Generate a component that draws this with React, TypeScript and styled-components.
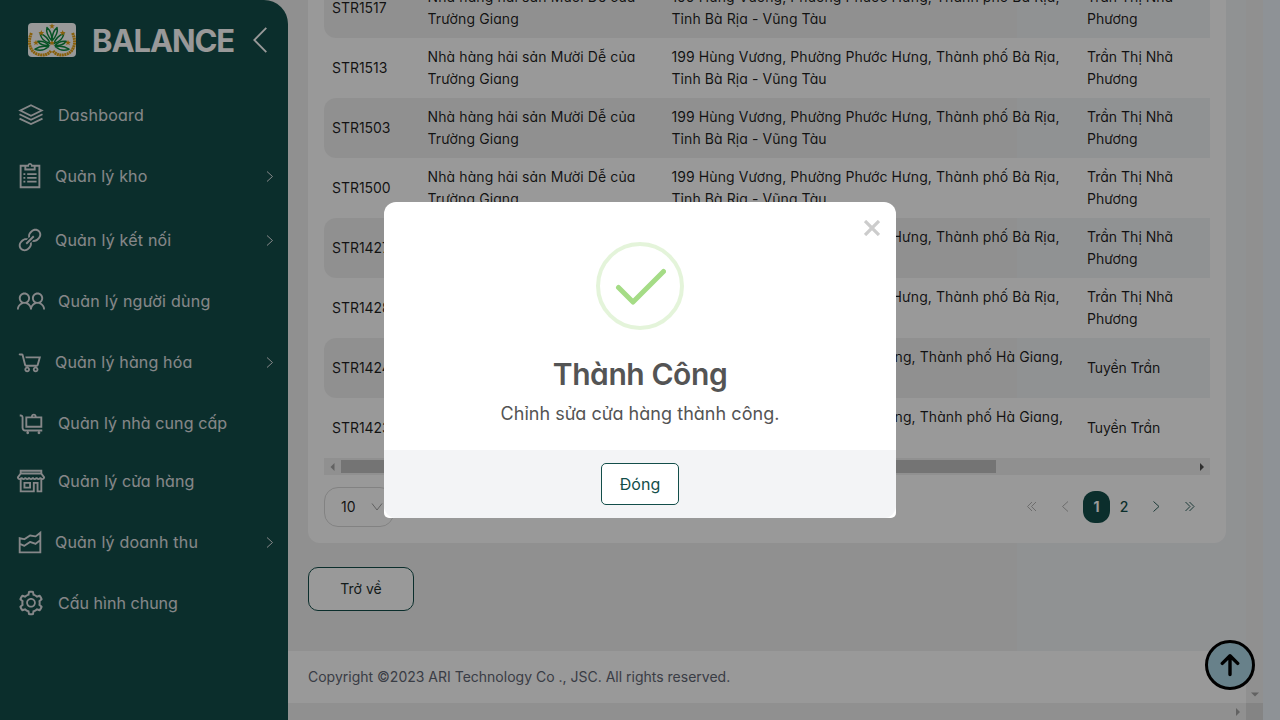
import React from 'react';
import styled, { createGlobalStyle, css } from 'styled-components';
import {
  LiaClipboardListSolid,
  LiaLinkSolid,
  LiaUserFriendsSolid,
  LiaShoppingCartSolid,
  LiaLuggageCartSolid,
  LiaStoreAltSolid,
  LiaChartAreaSolid,
} from 'react-icons/lia';
import { AiOutlineSetting } from 'react-icons/ai';

const brand = '#134e4a';

const GlobalStyle = createGlobalStyle`
  *, *::before, *::after { box-sizing: border-box; }
  body {
    margin: 0;
    overflow: hidden;
    background: #edf3fa;
    font-family: Inter, "Noto Sans", sans-serif;
    font-feature-settings: "cv11";
    font-size: 14px;
    color: rgba(0, 0, 0, 0.88);
  }
  button { font: inherit; font-feature-settings: inherit; letter-spacing: inherit; cursor: pointer; }
  svg { display: block; flex: none; }
`;

const Screen = styled.div`
  position: relative;
  display: flex;
  width: 1280px;
  height: 720px;
  overflow: hidden;
`;

/* ---------- sidebar ---------- */

const SidebarSlot = styled.div`
  flex: 0 0 288px;
  background: #f1f1f1;
`;

const Sidebar = styled.aside`
  height: 100%;
  background: ${brand};
  border-top-right-radius: 24px;
`;

const Brand = styled.header`
  display: flex;
  align-items: center;
  height: 86px;
  padding: 0 21px 6px 28px;
  color: #fff;
`;

const BrandName = styled.h1`
  flex: 1;
  margin: 0 0 0 16px;
  padding-top: 2px;
  font-size: 31px;
  line-height: 40px;
  font-weight: 700;
  letter-spacing: -1.1px;
`;

const Nav = styled.nav`
  display: flex;
  flex-direction: column;
`;

const NavItem = styled.a<{ $submenu?: boolean }>`
  display: flex;
  align-items: center;
  height: ${(p) => (p.$submenu ? 64 : 58)}px;
  padding: 0 12px 0 ${(p) => (p.$submenu ? 15 : 16)}px;
  gap: ${(p) => (p.$submenu ? 10 : 12)}px;
  color: #e0e2e5;
  font-size: 16px;
  line-height: 24px;
`;

const NavIcon = styled.span`
  display: flex;
  flex: 0 0 30px;
  justify-content: center;
`;

const NavLabel = styled.span<{ $tracking: number }>`
  flex: 1;
  letter-spacing: ${(p) => p.$tracking}px;
`;

/* ---------- main area ---------- */

const Main = styled.main`
  display: flex;
  flex-direction: column;
  flex: 0 0 958px;
  height: 720px;
  overflow: hidden;
  background: linear-gradient(90deg, #f1f1f1 729px, #f1f3f6 729px);
`;

const Content = styled.div`
  flex: 1;
  padding: 0 20px;
  overflow: hidden;
`;

const Card = styled.section`
  height: 543px;
  padding: 0 16px;
  overflow: hidden;
  background: #fff;
  border-radius: 0 0 12px 12px;
`;

const TableView = styled.div`
  display: flex;
  flex-direction: column;
  justify-content: flex-end;
  height: 458px;
  overflow: hidden;
`;

const Row = styled.div<{ $striped: boolean }>`
  display: grid;
  flex: 0 0 60px;
  grid-template-columns: 95.5px 244px 415.5px 1fr;
  align-items: center;
  line-height: 22px;
  border-radius: 12px 0 0 12px;
  ${(p) =>
    p.$striped &&
    css`
      background: linear-gradient(90deg, #f1f1f1 693px, #f1f3f6 693px);
    `}
`;

const Cell = styled.div<{ $tracking?: number; $end?: boolean }>`
  padding: 0 8px;
  white-space: nowrap;
  letter-spacing: ${(p) => p.$tracking ?? 0}px;
  ${(p) =>
    p.$end &&
    css`
      padding-right: 16px;

      & > :first-child {
        text-align: right;
      }
    `}
`;

const Line = styled.div`
  height: 22px;
`;

const ScrollTrack = styled.div`
  display: flex;
  align-items: center;
  justify-content: space-between;
  height: 17px;
  background: #f1f1f1;
`;

const ScrollThumb = styled.div`
  width: 655px;
  height: 13px;
  margin-right: auto;
  background: #c1c1c1;
`;

const ArrowBox = styled.span`
  display: flex;
  align-items: center;
  justify-content: center;
  width: 17px;
  height: 17px;
`;

const TableFooter = styled.div`
  display: flex;
  align-items: center;
  justify-content: space-between;
  height: 64px;
`;

const PageSize = styled.div`
  display: flex;
  align-items: center;
  justify-content: space-between;
  width: 70px;
  height: 40px;
  padding: 0 10px 1px 16px;
  border: 1px solid #d9d9d9;
  border-radius: 14px;

  svg {
    color: #a0a0a0;
  }
`;

const Pager = styled.div`
  display: flex;
  align-items: center;
  padding-right: 3px;
  color: ${brand};
`;

const PagerArrow = styled.button<{ $muted?: boolean }>`
  display: flex;
  align-items: center;
  justify-content: center;
  width: 34px;
  height: 32px;
  padding: 0 0 1px;
  border: 0;
  background: none;
  color: ${(p) => (p.$muted ? '#b5b5b5' : '#2f625e')};
`;

const PageNumber = styled.button<{ $current?: boolean }>`
  width: ${(p) => (p.$current ? 27 : 29)}px;
  height: 32px;
  padding: 0 ${(p) => (p.$current ? 0 : 1)}px 2px 0;
  border: 0;
  border-radius: 12px;
  background: ${(p) => (p.$current ? brand : 'transparent')};
  color: ${(p) => (p.$current ? '#fff' : brand)};
  font-weight: ${(p) => (p.$current ? 700 : 500)};
`;

const BackButton = styled.button`
  width: 106px;
  height: 44px;
  margin-top: 24px;
  padding: 0 0 2px;
  border: 1px solid ${brand};
  border-radius: 10px;
  background: #fff;
  color: #1f2f2e;
`;

const Copyright = styled.footer`
  display: flex;
  flex: 0 0 52px;
  align-items: center;
  padding: 0 20px 2px;
  background: #fff;
  color: #5f6673;
`;

const PageTrackX = styled.div`
  display: flex;
  flex: 0 0 17px;
  justify-content: flex-end;
  background: #f1f1f1;
`;

const PageTrackY = styled.div`
  display: flex;
  flex: 0 0 17px;
  flex-direction: column;
  justify-content: flex-end;
  background: #f1f1f1;
`;

const TrackCorner = styled.div`
  height: 17px;
  background: #dcdcdc;
`;

const ToTop = styled.button`
  position: absolute;
  right: 25px;
  bottom: 30px;
  display: flex;
  align-items: center;
  justify-content: center;
  width: 50px;
  height: 50px;
  padding: 0;
  border: 3px solid #000;
  border-radius: 50%;
  background: #add8e6;
`;

/* ---------- dialog ---------- */

const Backdrop = styled.div`
  position: absolute;
  inset: 0;
  display: flex;
  align-items: center;
  justify-content: center;
  background: rgba(0, 0, 0, 0.4);
`;

const Dialog = styled.div`
  position: relative;
  display: flex;
  flex-direction: column;
  align-items: center;
  width: 512px;
  height: 316px;
  overflow: hidden;
  background: #fff;
  border-radius: 12px 12px 5px 5px;
  color: #545454;
`;

const CloseButton = styled.button`
  position: absolute;
  top: 18px;
  right: 16px;
  padding: 0;
  border: 0;
  background: none;
`;

const SuccessRing = styled.div`
  display: flex;
  align-items: center;
  justify-content: center;
  width: 88px;
  height: 88px;
  margin-top: 40px;
  border: 4px solid rgba(165, 220, 134, 0.3);
  border-radius: 50%;
`;

const DialogTitle = styled.h2`
  margin: 26px 0 0;
  font-size: 30px;
  line-height: 36px;
  font-weight: 600;
  letter-spacing: -0.42px;
`;

const DialogText = styled.p`
  flex: 1;
  margin: 8px 0 0;
  font-size: 18px;
  line-height: 27px;
  letter-spacing: 0.04px;
`;

const DialogActions = styled.div`
  display: flex;
  align-items: center;
  justify-content: center;
  width: 100%;
  height: 68px;
  background: #f3f4f6;
  border-radius: 0 0 12px 12px;
`;

const DialogButton = styled.button`
  width: 78px;
  height: 42px;
  padding: 0;
  border: 1px solid ${brand};
  border-radius: 5px;
  background: #fff;
  color: ${brand};
  font-size: 16px;
`;

/* ---------- drawings ---------- */

const Logo = () => (
  <svg width="48" height="34" viewBox="0 0 48 34" fill="none">
    <rect width="48" height="34" rx="4" fill="#fff" />
    <g stroke="#e3a013" strokeWidth="3" strokeDasharray="2 0.5">
      <path d="M3.4 10C-.6 19 1.6 28.5 9.6 31.3c5 1.6 10.6.6 13.4-3.6" />
      <path d="M44.6 10c4 9 1.8 18.5-6.2 21.3-5 1.6-10.6.6-13.4-3.6" />
    </g>
    <g stroke="#0c8a3e" strokeWidth="1.5" strokeLinejoin="round">
      <path d="M24 18c-3.500-4-6.500-8-5-13.500C22.500 7.500 24 12 24 18c0-6 1.500-10.500 5-13.500 1.500 5.500-1.500 9.500-5 13.500z" />
      <path d="M22 20.500c-5-1.500-9-4.500-9.800-10C17.500 12.500 20.500 16 22 20.500zM26 20.500c5-1.500 9-4.500 9.800-10C30.500 12.500 27.500 16 26 20.500z" />
      <path d="M21 22.500c-3.500.3-8.500-.5-11.200-4.200 4.200-.6 8.200.7 11.200 4.200zM27 22.500c3.500.3 8.500-.5 11.200-4.200-4.200-.6-8.200.7-11.200 4.200z" />
      <path d="M20.500 23.800c-4 3.500-8.500 4.400-13.500 2.400 4-2.700 9-3.400 13.500-2.400zM27.500 23.800c4 3.500 8.500 4.400 13.500 2.400-4-2.700-9-3.400-13.500-2.400z" />
    </g>
    <g fill="#e3a013">
      {[
        [24, 3.2],
        [13.3, 10],
        [34.7, 10],
        [8, 19.8],
        [40, 19.8],
        [24, 20],
      ].map(([x, y]) => (
        <path
          key={`${x}-${y}`}
          transform={`translate(${x} ${y})`}
          d="M0-3 .75-1 2.900-.9 1.200.4 1.800 2.500 0 1.300-1.800 2.500-1.200.4-2.900-.9-.75-1z"
        />
      ))}
    </g>
  </svg>
);

const CollapseIcon = () => (
  <svg width="14" height="26" viewBox="0 0 14 26" fill="none" stroke="currentColor" strokeWidth="1.8">
    <path d="M13.300.8 1.300 13l12 12.200" />
  </svg>
);

const LayersIcon = () => (
  <svg width="26" height="24" viewBox="0 0 26 24" fill="none" stroke="currentColor" strokeWidth="1.8">
    <path d="M13 2.300 23.700 7.500 13 12.700 2.300 7.500z" />
    <path d="m1.500 11.300 11.500 5.500 11.500-5.500" />
    <path d="m1.500 15.600 11.500 5.500 11.500-5.500" />
  </svg>
);

const chevrons = {
  submenu: 'M3 1.500 8.500 6.500 3 11.500',
  right: 'M3.500 1.500 9 6.500 3.500 11.500',
  left: 'M8 1.500 2.500 6.500 8 11.500',
  doubleRight: 'M1.500 2 6 6.500 1.500 11M5.500 2 10 6.500 5.500 11',
  doubleLeft: 'M6 2 1.500 6.500 6 11M10 2 5.500 6.500 10 11',
  down: 'M1 3.500 6 10 11 3.500',
};

const Chevron = ({ dir }: { dir: keyof typeof chevrons }) => (
  <svg width="12" height="13" viewBox="0 0 12 13" fill="none" stroke="currentColor" strokeWidth="1">
    <path d={chevrons[dir]} />
  </svg>
);

const triangles = { left: 'M5.500 0v8L1.500 4z', right: 'M2 0v8l4-4z', down: 'M0 1.500h8l-4 4z' };

const Triangle = ({ dir, color }: { dir: keyof typeof triangles; color: string }) => (
  <ArrowBox>
    <svg width="8" height="8" viewBox="0 0 8 8" fill={color}>
      <path d={triangles[dir]} />
    </svg>
  </ArrowBox>
);

/* ---------- data ---------- */

const navItems = [
  { label: 'Dashboard', icon: <LayersIcon />, tracking: 0.22 },
  { label: 'Quản lý kho', icon: <LiaClipboardListSolid size={30} />, submenu: true, tracking: 0.16 },
  { label: 'Quản lý kết nối', icon: <LiaLinkSolid size={30} />, submenu: true, tracking: 0.21 },
  { label: 'Quản lý người dùng', icon: <LiaUserFriendsSolid size={30} />, tracking: 0.25 },
  { label: 'Quản lý hàng hóa', icon: <LiaShoppingCartSolid size={30} />, submenu: true, tracking: 0.17 },
  { label: 'Quản lý nhà cung cấp', icon: <LiaLuggageCartSolid size={30} />, tracking: 0.1 },
  { label: 'Quản lý cửa hàng', icon: <LiaStoreAltSolid size={30} />, tracking: 0.14 },
  { label: 'Quản lý doanh thu', icon: <LiaChartAreaSolid size={30} />, submenu: true, tracking: 0.2 },
  { label: 'Cấu hình chung', icon: <AiOutlineSetting size={28} />, tracking: 0.03 },
];

const seafood = {
  name: ['Nhà hàng hải sản Mười Dễ của', 'Trường Giang'],
  address: ['199 Hùng Vương, Phường Phước Hưng, Thành phố Bà Rịa,', 'Tỉnh Bà Rịa - Vũng Tàu'],
  owner: ['Trần Thị Nhã', 'Phương'],
};

const haGiang = {
  name: ['Tuyền Trần'],
  address: ['Phường Quang Trung, Thành phố Hà Giang,', 'Tỉnh Hà Giang'],
  owner: ['Tuyền Trần'],
  alignEnd: true,
};

const stores: { code: string; name: string[]; address: string[]; owner: string[]; alignEnd?: boolean }[] = [
  { code: 'STR1517', ...seafood },
  { code: 'STR1513', ...seafood },
  { code: 'STR1503', ...seafood },
  { code: 'STR1500', ...seafood },
  { code: 'STR1427', ...seafood },
  { code: 'STR1428', ...seafood },
  { code: 'STR1424', ...haGiang },
  { code: 'STR1423', ...haGiang },
];

const Lines = ({ text }: { text: string[] }) => (
  <>
    {text.map((line) => (
      <Line key={line}>{line}</Line>
    ))}
  </>
);

export default function App() {
  return (
    <Screen>
      <GlobalStyle />
      <SidebarSlot>
        <Sidebar>
          <Brand>
            <Logo />
            <BrandName>BALANCE</BrandName>
            <CollapseIcon />
          </Brand>
          <Nav>
            {navItems.map((item) => (
              <NavItem key={item.label} $submenu={item.submenu}>
                <NavIcon>{item.icon}</NavIcon>
                <NavLabel $tracking={item.tracking}>{item.label}</NavLabel>
                {item.submenu && <Chevron dir="submenu" />}
              </NavItem>
            ))}
          </Nav>
        </Sidebar>
      </SidebarSlot>

      <Main>
        <Content>
          <Card>
            <TableView>
              {stores.map((store, i) => (
                <Row key={store.code} $striped={i % 2 === 0}>
                  <Cell $tracking={-0.05}>{store.code}</Cell>
                  <Cell $tracking={0.11}>
                    <Lines text={store.name} />
                  </Cell>
                  <Cell $tracking={0.08} $end={store.alignEnd}>
                    <Lines text={store.address} />
                  </Cell>
                  <Cell $tracking={store.alignEnd ? -0.13 : 0}>
                    <Lines text={store.owner} />
                  </Cell>
                </Row>
              ))}
            </TableView>
            <ScrollTrack>
              <Triangle dir="left" color="#a3a3a3" />
              <ScrollThumb />
              <Triangle dir="right" color="#505050" />
            </ScrollTrack>
            <TableFooter>
              <PageSize>
                10
                <Chevron dir="down" />
              </PageSize>
              <Pager>
                <PagerArrow $muted>
                  <Chevron dir="doubleLeft" />
                </PagerArrow>
                <PagerArrow $muted>
                  <Chevron dir="left" />
                </PagerArrow>
                <PageNumber $current>1</PageNumber>
                <PageNumber>2</PageNumber>
                <PagerArrow>
                  <Chevron dir="right" />
                </PagerArrow>
                <PagerArrow>
                  <Chevron dir="doubleRight" />
                </PagerArrow>
              </Pager>
            </TableFooter>
          </Card>
          <BackButton>Trở về</BackButton>
        </Content>
        <Copyright>Copyright ©2023 ARI Technology Co ., JSC. All rights reserved.</Copyright>
        <PageTrackX>
          <Triangle dir="right" color="#a3a3a3" />
        </PageTrackX>
      </Main>
      <PageTrackY>
        <Triangle dir="down" color="#a3a3a3" />
        <TrackCorner />
      </PageTrackY>

      <ToTop aria-label="Lên đầu trang">
        <svg width="20" height="24" viewBox="0 0 20 24" fill="none" stroke="#000" strokeWidth="3.400" strokeLinecap="round" strokeLinejoin="round">
          <path d="M10 21.500V2.700M2.300 10.400 10 2.700l7.700 7.700" />
        </svg>
      </ToTop>

      <Backdrop>
        <Dialog role="dialog">
          <CloseButton aria-label="Đóng hộp thoại">
            <svg width="16" height="16" viewBox="0 0 16 16" stroke="#ccc" strokeWidth="3.300">
              <path d="m1 1 14 14M15 1 1 15" />
            </svg>
          </CloseButton>
          <SuccessRing>
            <svg width="52" height="40" viewBox="0 0 52 40" fill="none" stroke="#a5dc86" strokeWidth="5" strokeLinecap="round" strokeLinejoin="round">
              <path d="M4.500 21.500 19 36 49.500 5.500" />
            </svg>
          </SuccessRing>
          <DialogTitle>Thành Công</DialogTitle>
          <DialogText>Chỉnh sửa cửa hàng thành công.</DialogText>
          <DialogActions>
            <DialogButton>Đóng</DialogButton>
          </DialogActions>
        </Dialog>
      </Backdrop>
    </Screen>
  );
}
